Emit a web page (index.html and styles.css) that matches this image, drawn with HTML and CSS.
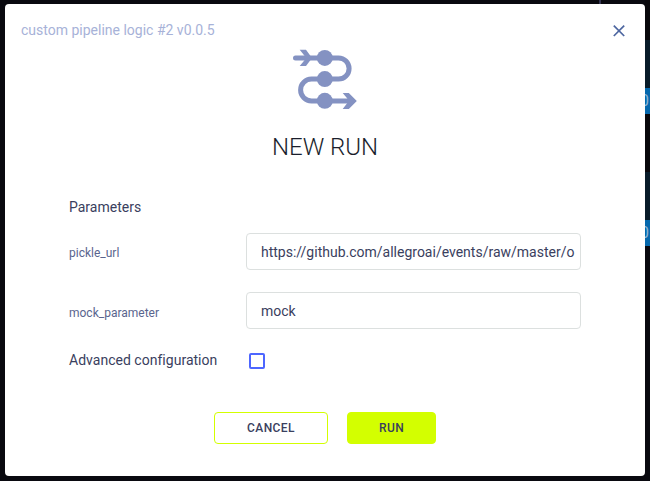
FILE: index.html
```html
<!DOCTYPE html>
<html lang="en">
<head>
<meta charset="utf-8">
<title>New run</title>
<link rel="stylesheet" href="styles.css">
</head>
<body>
<div class="backdrop">
  <div class="edge"></div>
  <div class="cards">
    <div class="card"><div class="tag">0</div></div>
    <div class="card"><div class="tag">0</div></div>
  </div>
</div>
<main class="dialog">
  <header class="top">
    <span>custom pipeline logic #2 v0.0.5</span>
    <svg class="close" width="12" height="12" viewBox="0 0 12 12"><path d="M.8 .6L11.200 11M11.200 .6L.8 11"/></svg>
  </header>
  <svg class="logo" width="66" height="62" viewBox="292 48 66 62">
    <path class="line" d="M295.500 57.900H338.500A10.600 10.600 0 0 1 338.500 79.100H311.500A10.900 10.900 0 0 0 311.500 100.900H351"/>
    <circle cx="324.800" cy="57.900" r="8"/><circle cx="324.800" cy="79.100" r="8"/><circle cx="324.800" cy="100.800" r="8"/>
    <path d="M299.700 49.800H306L312 57.900L306 66H299.700L304.700 60V56ZM342.700 93H348.800L356.800 100.900L348.800 109H342.700L347.300 103V98.500Z"/>
  </svg>
  <h1>NEW RUN</h1>
  <section class="form">
    <h2>Parameters</h2>
    <div class="row"><label>pickle_url</label><div class="field"><span>https://github.com/allegroai/events/raw/master/o</span></div></div>
    <div class="row"><label class="lower">mock_parameter</label><div class="field"><span>mock</span></div></div>
    <div class="advanced"><span>Advanced configuration</span><i class="check"></i></div>
  </section>
  <footer><button class="cancel">CANCEL</button><button class="run">RUN</button></footer>
</main>
</body>
</html>
```
FILE: styles.css
```css
* { box-sizing: border-box; }
body {
  margin: 0;
  width: 650px;
  height: 481px;
  padding: 4px 5px 5px;
  overflow: hidden;
  background: #09090f;
  font-family: Roboto, sans-serif;
  font-size: 14px;
  color: #3a405e;
}
.backdrop {
  position: absolute;
  inset: 0;
  display: flex;
  justify-content: flex-end;
}
.edge { width: 2px; height: 4px; margin-right: 44px; background: #343450; }
.cards { width: 5px; padding-top: 40px; overflow: hidden; background: #08070b; height: 246px; }
.card { height: 74px; padding-top: 48px; margin-bottom: 58px; background: #081b29; }
.tag {
  height: 26px;
  line-height: 26px;
  margin-left: -5px;
  background: #0568ad;
  color: #8fb4d3;
  font-size: 16px;
}
.dialog {
  position: relative;
  display: flex;
  flex-direction: column;
  height: 472px;
  background: #fff;
  border-radius: 4px;
}
.top {
  display: flex;
  justify-content: space-between;
  align-items: center;
  height: 20px;
  margin: 16px 20px 0 16px;
  color: #a7b2d8;
}
.close { margin-top: 2px; fill: none; stroke: #4d66a0; stroke-width: 1.7; }
.logo { margin: 8px 0 0 287px; fill: #8492c2; }
.line { fill: none; stroke: #8492c2; stroke-width: 5; stroke-linecap: round; }
h1 {
  margin: 22px 0 0;
  height: 30px;
  line-height: 30px;
  text-align: center;
  font-size: 24px;
  font-weight: 300;
  color: #1a1e2c;
}
.form { padding: 35px 64px 0; }
h2 { margin: 0 0 16px; height: 20px; line-height: 20px; font-size: 14px; font-weight: 400; }
.row { display: flex; align-items: center; height: 37px; margin-bottom: 22px; }
.row label { width: 177px; padding-top: 3px; font-size: 12px; color: #5a658e; }
.row .lower { padding-top: 5px; }
.field {
  flex: 1;
  height: 37px;
  padding: 1px 5px 0 14px;
  line-height: 35px;
  border: 1px solid #dce0df;
  border-radius: 4px;
  overflow: hidden;
  white-space: nowrap;
}
.advanced { display: flex; align-items: center; height: 20px; margin-top: -1px; }
.advanced span { width: 180px; letter-spacing: .02px; }
.check { width: 16px; height: 16px; margin-top: 2px; border: 2px solid #4d66ff; border-radius: 2px; }
footer { display: flex; gap: 19px; margin: 42px 0 0 209px; }
button {
  height: 32px;
  padding: 0;
  border: 1px solid #d3ff00;
  border-radius: 4px;
  font: 500 12px Roboto, sans-serif;
  letter-spacing: .4px;
  color: #3a405e;
}
.cancel { width: 114px; background: #fff; }
.run { width: 89px; background: #d3ff00; }
```
